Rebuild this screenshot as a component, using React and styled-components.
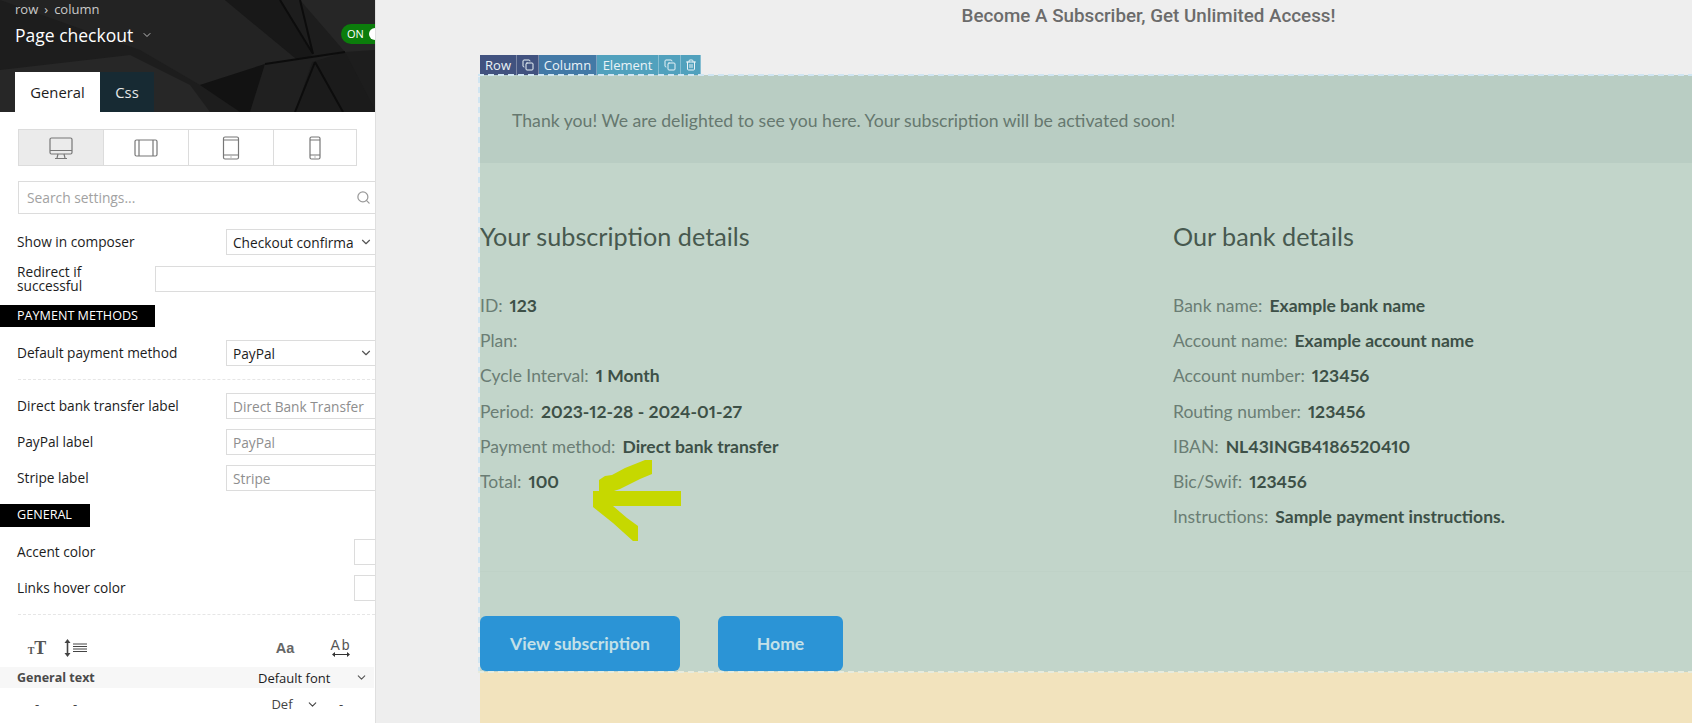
import React from "react";
import styled, { createGlobalStyle } from "styled-components";
import { ChevronDown, Search, Copy, Trash2 } from "lucide-react";

const GlobalStyle = createGlobalStyle`
  html, body {
    margin: 0;
    padding: 0;
    height: 100%;
    overflow: hidden;
    background: #eeeeee;
    font-family: "Open Sans", sans-serif;
  }
  * { box-sizing: border-box; }
`;

const Page = styled.div`
  display: flex;
  width: 1692px;
  height: 723px;
  overflow: hidden;
  position: relative;
`;

/* ---------- sidebar ---------- */
const Sidebar = styled.aside`
  width: 376px;
  flex: none;
  height: 723px;
  background: #fff;
  border-right: 1px solid #dfdfdf;
  overflow: hidden;
  color: #1c1c1c;
  font-size: 13.7px;
`;

const Header = styled.header`
  position: relative;
  height: 112px;
  background: #1d1d1d;
  overflow: hidden;
`;

const HeaderArt = styled.svg`
  position: absolute;
  inset: 0;
`;

const HeaderInner = styled.div`
  position: relative;
  height: 100%;
  padding-left: 15px;
  display: flex;
  flex-direction: column;
  color: #fff;
`;

const Crumbs = styled.div`
  font-size: 13px;
  line-height: 18px;
  color: #c9c9c9;
  display: flex;
  gap: 6px;
`;

const TitleRow = styled.div`
  display: flex;
  align-items: center;
  height: 34px;
  font-size: 17.5px;
  gap: 8px;
  svg { color: #bbb; }
`;

const Toggle = styled.div`
  position: absolute;
  left: 341px;
  top: 24px;
  width: 60px;
  height: 20px;
  border-radius: 10px;
  background: #0b7d0b;
  color: #fff;
  font-size: 11px;
  line-height: 20px;
  padding-left: 6px;
  &::after {
    content: "";
    position: absolute;
    left: 28px;
    top: 4px;
    width: 12px;
    height: 12px;
    border-radius: 50%;
    background: #fff;
  }
`;

const Tabs = styled.div`
  display: flex;
  margin-top: auto;
`;

const Tab = styled.div`
  height: 40px;
  width: ${(p) => p.$w}px;
  display: flex;
  align-items: center;
  justify-content: center;
  font-size: 14.8px;
  background: ${(p) => (p.$active ? "#fff" : "#172a33")};
  color: ${(p) => (p.$active ? "#1c1c1c" : "#e8e8e8")};
`;

const Devices = styled.div`
  display: grid;
  grid-template-columns: 84px 85px 85px 83px;
  width: 339px;
  height: 37px;
  margin: 17px 0 0 18px;
  border: 1px solid #dcdcdc;
`;

const Device = styled.div`
  display: flex;
  align-items: center;
  justify-content: center;
  background: ${(p) => (p.$active ? "#ebebeb" : "#fff")};
  & + & { border-left: 1px solid #dcdcdc; }
  svg { display: block; }
`;

const SearchBox = styled.div`
  height: 33px;
  margin: 15px 0 0 18px;
  padding: 0 4px 0 8px;
  border: 1px solid #dcdcdc;
  border-right: none;
  display: flex;
  align-items: center;
  justify-content: space-between;
  font-size: 13.8px;
  color: #a2a2a2;
  svg { color: #9a9a9a; }
`;

const FormRow = styled.div`
  display: flex;
  align-items: center;
  height: ${(p) => p.$h || 26}px;
  margin-top: ${(p) => p.$mt || 0}px;
  padding-left: 17px;
`;

const RowLabel = styled.div`
  width: ${(p) => p.$w || 209}px;
  flex: none;
  line-height: 14px;
`;

const Field = styled.div`
  flex: 1;
  min-width: 0;
  height: 100%;
  border: 1px solid #dcdcdc;
  border-right: none;
  display: flex;
  align-items: center;
  justify-content: space-between;
  padding: 0 2px 0 6px;
  white-space: nowrap;
  overflow: hidden;
  color: ${(p) => (p.$muted ? "#8e8e8e" : "#1c1c1c")};
  svg { color: #555; flex: none; }
`;

const SectionBar = styled.div`
  width: ${(p) => p.$w}px;
  height: ${(p) => p.$h}px;
  margin-top: ${(p) => p.$mt}px;
  padding-left: 17px;
  background: #000;
  color: #fff;
  font-size: 12.6px;
  line-height: ${(p) => p.$h - 1}px;
`;

const Dashed = styled.div`
  margin: ${(p) => p.$mt}px 0 0 18px;
  border-top: 1px dashed #e6e6e6;
`;

const TypeIcons = styled.div`
  display: flex;
  align-items: center;
  height: 30px;
  margin-top: 18px;
  color: #444;
`;

const TypeIcon = styled.div`
  width: ${(p) => p.$w}px;
  margin-left: ${(p) => p.$ml}px;
  flex: none;
  display: flex;
  flex-direction: column;
  align-items: center;
  line-height: 1;
`;

const SizeGlyph = styled.span`
  font-family: "Liberation Serif", serif;
  font-weight: 700;
  font-size: 18px;
  color: #555;
  small { font-size: 10px; }
`;

const CaseGlyph = styled.span`
  font-family: "Liberation Sans", sans-serif;
  font-weight: 700;
  font-size: 14.5px;
  color: #666;
`;

const SpacingGlyph = styled.span`
  font-family: "Liberation Sans", sans-serif;
  font-size: 14px;
  letter-spacing: 2px;
  line-height: 12px;
  color: #555;
`;

const GeneralRow = styled.div`
  display: flex;
  align-items: center;
  height: 21px;
  margin-top: 4px;
  padding-left: 17px;
  background: #f7f7f7;
  font-size: 13px;
  width: 374px;
  b { color: #4a4a4a; width: 241px; flex: none; font-size: 12.5px; }
  span { width: 97px; flex: none; }
  svg { color: #555; }
`;

const DefRow = styled.div`
  display: flex;
  align-items: center;
  height: 20px;
  margin-top: 6px;
  font-size: 13px;
  color: #444;
`;

const DefCell = styled.span`
  width: ${(p) => p.$w}px;
  margin-left: ${(p) => p.$ml}px;
  flex: none;
  display: flex;
  align-items: center;
  justify-content: center;
`;

/* ---------- main ---------- */
const Main = styled.main`
  flex: 1;
  min-width: 0;
  display: flex;
  flex-direction: column;
`;

const PageHeading = styled.h2`
  margin: 0;
  height: 55px;
  padding: 4px 0 0 0;
  text-align: center;
  font-family: Roboto, sans-serif;
  font-weight: 500;
  font-size: 18.8px;
  line-height: 24px;
  color: #6b6b6b;
  width: 1545px;
`;

const Canvas = styled.div`
  flex: 1;
  margin-left: 104px;
  position: relative;
  display: flex;
  flex-direction: column;
`;

const ElementBar = styled.div`
  display: flex;
  height: 20px;
  flex: none;
  font-family: "Open Sans", sans-serif;
  font-size: 13px;
  color: #eaf3f7;
`;

const BarItem = styled.div`
  display: flex;
  align-items: center;
  justify-content: center;
  width: ${(p) => p.$w}px;
  background: ${(p) => p.$bg};
  border-right: 1px solid rgba(255, 255, 255, 0.3);
`;

const Confirm = styled.section`
  position: relative;
  height: 597px;
  flex: none;
  background: #c2d5ca;
  font-family: Lato, sans-serif;
  display: flex;
  flex-direction: column;
  &::before {
    content: "";
    position: absolute;
    inset: -1px 0 -1px -2px;
    pointer-events: none;
    background:
      repeating-linear-gradient(90deg, #cfe5f2 0 6px, transparent 6px 10px) top / 100% 2px no-repeat,
      repeating-linear-gradient(90deg, #e6ebdd 0 6px, transparent 6px 10px) bottom / 100% 2px no-repeat,
      repeating-linear-gradient(0deg, #cfe5f2 0 6px, transparent 6px 10px) left / 2px 100% no-repeat;
  }
`;

const SandBlock = styled.div`
  flex: 1;
  background: #f2e3bd;
`;

const ThankBand = styled.div`
  height: 88px;
  flex: none;
  background: #b9cdc3;
  padding: 2px 0 0 32px;
  display: flex;
  align-items: center;
  font-size: 17.65px;
  color: #66786f;
`;

const Details = styled.div`
  display: grid;
  grid-template-columns: 693px 1fr;
  height: 409px;
  padding-top: 53px;
  border-bottom: 1px solid #bfd2c7;
  flex: none;
`;

const DetailTitle = styled.h3`
  margin: 0 0 32px;
  font-weight: 400;
  font-size: 25.2px;
  line-height: 40px;
  color: #47594f;
`;

const InfoRow = styled.div`
  display: flex;
  gap: 7px;
  font-size: 17.5px;
  line-height: 35.2px;
  color: #6a7d74;
  font-variant-numeric: proportional-nums;
  b { color: #3d5047; font-weight: 700; }
`;

const Actions = styled.div`
  display: flex;
  gap: 38px;
  padding-top: 44px;
`;

const ActionButton = styled.div`
  width: ${(p) => p.$w}px;
  height: 55px;
  border-radius: 6px;
  background: #2b94d6;
  color: #c3e0e8;
  display: flex;
  align-items: center;
  justify-content: center;
  font-size: 17.6px;
  font-weight: 700;
`;

const Arrow = styled.svg`
  position: absolute;
  left: 592px;
  top: 459px;
`;

const Monitor = () => (
  <svg width="24" height="24" viewBox="0 0 24 24" fill="none" stroke="#777" strokeWidth="1.2">
    <rect x="1" y="2" width="22" height="16" rx="1.5" />
    <path d="M1 14.5h22M9 18l-1 4M15 18l1 4M6 22.5h12" />
  </svg>
);
const TabletWide = () => (
  <svg width="24" height="20" viewBox="0 0 24 20" fill="none" stroke="#777" strokeWidth="1.2">
    <rect x="1" y="2" width="22" height="16" rx="1.5" />
    <path d="M5 2v16M19 2v16" />
  </svg>
);
const Tablet = () => (
  <svg width="18" height="24" viewBox="0 0 18 24" fill="none" stroke="#777" strokeWidth="1.2">
    <rect x="1.5" y="1" width="15" height="22" rx="1.5" />
    <path d="M1.5 4h15M1.5 19h15M8.5 21h1" />
  </svg>
);
const Phone = () => (
  <svg width="12" height="24" viewBox="0 0 12 24" fill="none" stroke="#777" strokeWidth="1.2">
    <rect x="1" y="1" width="10" height="22" rx="1.5" />
    <path d="M1 4h10M1 19h10M5.5 21h1" />
  </svg>
);
const LineHeightIcon = () => (
  <svg width="24" height="18" viewBox="0 0 24 18" fill="#444" stroke="#444">
    <path d="M3.5 3v12" strokeWidth="1.6" />
    <path d="M3.5 0l3 4h-6zM3.5 18l3-4h-6z" stroke="none" />
    <path d="M9 5h14M9 7.5h14M9 10h14M9 12.5h14" strokeWidth="1" />
  </svg>
);

const subscription = [
  ["ID:", "123"],
  ["Plan:", ""],
  ["Cycle Interval:", "1 Month"],
  ["Period:", "2023-12-28 - 2024-01-27"],
  ["Payment method:", "Direct bank transfer"],
  ["Total:", "100"],
];

const bank = [
  ["Bank name:", "Example bank name"],
  ["Account name:", "Example account name"],
  ["Account number:", "123456"],
  ["Routing number:", "123456"],
  ["IBAN:", "NL43INGB4186520410"],
  ["Bic/Swif:", "123456"],
  ["Instructions:", "Sample payment instructions."],
];

export default function App() {
  return (
    <Page>
      <GlobalStyle />
      <Sidebar>
        <Header>
          <HeaderArt width="376" height="112" viewBox="0 0 376 112">
            <polygon points="0,0 225,0 300,62 265,64 200,85 140,50" fill="#232323" />
            <polygon points="225,0 280,0 312,55 300,62" fill="#181818" />
            <polygon points="0,70 130,55 190,85 210,112 0,112" fill="#272727" />
            <polygon points="200,85 265,64 258,112 240,112" fill="#121212" />
            <polygon points="265,64 345,52 312,112 250,112" fill="#202020" />
            <polygon points="300,0 376,0 376,50 345,52" fill="#262626" />
            <polygon points="312,62 345,52 376,112 295,112" fill="#1b1b1b" />
            <path d="M280 0l33 54M300 0l13 54M265 64l80-12M315 62l-20 50M315 62l28 50" stroke="#0c0c0c" strokeWidth="2" fill="none" />
          </HeaderArt>
          <HeaderInner>
            <Crumbs>
              <span>row</span>
              <span>›</span>
              <span>column</span>
            </Crumbs>
            <TitleRow>
              Page checkout
              <ChevronDown size={12} />
            </TitleRow>
            <Toggle>ON</Toggle>
            <Tabs>
              <Tab $w={85} $active>General</Tab>
              <Tab $w={54}>Css</Tab>
            </Tabs>
          </HeaderInner>
        </Header>

        <Devices>
          <Device $active><Monitor /></Device>
          <Device><TabletWide /></Device>
          <Device><Tablet /></Device>
          <Device><Phone /></Device>
        </Devices>

        <SearchBox>
          Search settings...
          <Search size={15} />
        </SearchBox>

        <FormRow $mt={15}>
          <RowLabel>Show in composer</RowLabel>
          <Field>Checkout confirma <ChevronDown size={14} /></Field>
        </FormRow>
        <FormRow $mt={11}>
          <RowLabel $w={138}>Redirect if<br />successful</RowLabel>
          <Field />
        </FormRow>

        <SectionBar $w={155} $h={22} $mt={13}>PAYMENT METHODS</SectionBar>

        <FormRow $mt={13}>
          <RowLabel>Default payment method</RowLabel>
          <Field>PayPal <ChevronDown size={14} /></Field>
        </FormRow>
        <Dashed $mt={13} />
        <FormRow $mt={13}>
          <RowLabel>Direct bank transfer label</RowLabel>
          <Field $muted>Direct Bank Transfer</Field>
        </FormRow>
        <FormRow $mt={10}>
          <RowLabel>PayPal label</RowLabel>
          <Field $muted>PayPal</Field>
        </FormRow>
        <FormRow $mt={10}>
          <RowLabel>Stripe label</RowLabel>
          <Field $muted>Stripe</Field>
        </FormRow>

        <SectionBar $w={90} $h={23} $mt={13}>GENERAL</SectionBar>

        <FormRow $mt={12}>
          <RowLabel $w={337}>Accent color</RowLabel>
          <Field />
        </FormRow>
        <FormRow $mt={10}>
          <RowLabel $w={337}>Links hover color</RowLabel>
          <Field />
        </FormRow>
        <Dashed $mt={13} />

        <TypeIcons>
          <TypeIcon $w={24} $ml={25}>
            <SizeGlyph><small>T</small>T</SizeGlyph>
          </TypeIcon>
          <TypeIcon $w={26} $ml={14}>
            <LineHeightIcon />
          </TypeIcon>
          <TypeIcon $w={24} $ml={184}>
            <CaseGlyph>Aa</CaseGlyph>
          </TypeIcon>
          <TypeIcon $w={24} $ml={32}>
            <SpacingGlyph>Ab</SpacingGlyph>
            <svg width="20" height="7" viewBox="0 0 20 7" fill="#333" stroke="#333">
              <path d="M3 3.5h14" />
              <path d="M1 3.5l3-2.5v5zM19 3.5l-3-2.5v5z" stroke="none" />
            </svg>
          </TypeIcon>
        </TypeIcons>

        <GeneralRow>
          <b>General text</b>
          <span>Default font</span>
          <ChevronDown size={13} />
        </GeneralRow>
        <DefRow>
          <DefCell $w={14} $ml={30}>-</DefCell>
          <DefCell $w={14} $ml={24}>-</DefCell>
          <DefCell $w={30} $ml={185}>Def</DefCell>
          <DefCell $w={14} $ml={8}><ChevronDown size={13} /></DefCell>
          <DefCell $w={14} $ml={15}>-</DefCell>
        </DefRow>
      </Sidebar>

      <Main>
        <PageHeading>Become A Subscriber, Get Unlimited Access!</PageHeading>
        <Canvas>
          <ElementBar>
            <BarItem $w={37} $bg="#41527f">Row</BarItem>
            <BarItem $w={22} $bg="#41527f"><Copy size={12} /></BarItem>
            <BarItem $w={58} $bg="#4379a6">Column</BarItem>
            <BarItem $w={62} $bg="#51a1bd">Element</BarItem>
            <BarItem $w={22} $bg="#51a1bd"><Copy size={12} /></BarItem>
            <BarItem $w={20} $bg="#51a1bd"><Trash2 size={12} /></BarItem>
          </ElementBar>
          <Confirm>
            <ThankBand>Thank you! We are delighted to see you here. Your subscription will be activated soon!</ThankBand>
            <Details>
              <div>
                <DetailTitle>Your subscription details</DetailTitle>
                {subscription.map(([label, value]) => (
                  <InfoRow key={label}>
                    {label}
                    {value && <b>{value}</b>}
                  </InfoRow>
                ))}
              </div>
              <div>
                <DetailTitle>Our bank details</DetailTitle>
                {bank.map(([label, value]) => (
                  <InfoRow key={label}>
                    {label}
                    <b>{value}</b>
                  </InfoRow>
                ))}
              </div>
            </Details>
            <Actions>
              <ActionButton $w={200}>View subscription</ActionButton>
              <ActionButton $w={125}>Home</ActionButton>
            </Actions>
          </Confirm>
          <SandBlock />
        </Canvas>
      </Main>

      <Arrow width="90" height="85" viewBox="0 0 90 85">
        <polygon
          fill="#c6d800"
          points="7,32 7,21 13,17 20,16 33,9 53,1 60,1 60,15 48,20 28,30 22,32 89,32 89,47 21,47 35,59 46,67 46,82 41,82 21,64 1,48 1,32"
        />
      </Arrow>
    </Page>
  );
}
